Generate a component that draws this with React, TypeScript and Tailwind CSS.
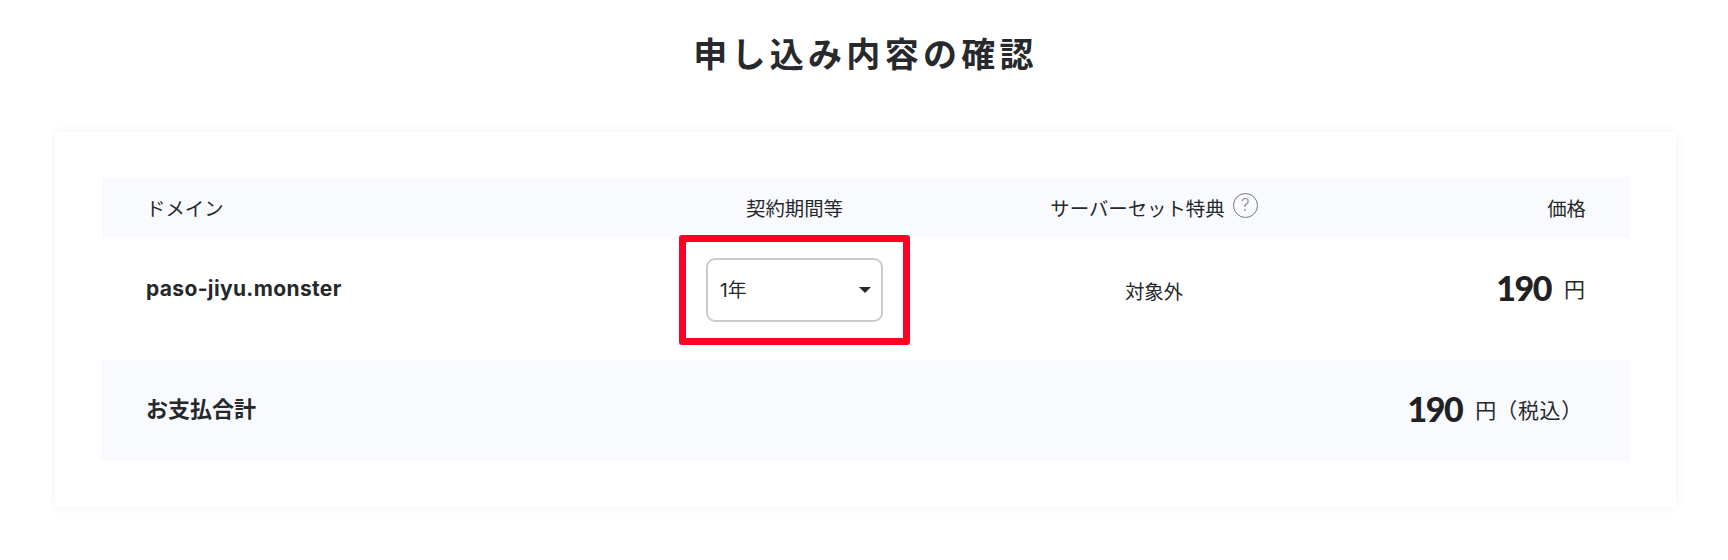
const sans = "font-['Inter','Noto_Sans_CJK_JP',sans-serif]";
const num = "font-['Lato','Noto_Sans_CJK_JP',sans-serif]";
const cols = 'grid-cols-[574px_239px_480px_236px]';

function Price({ suffix }: { suffix?: string }) {
  return (
    <span className="flex items-center justify-end">
      <span className={`${num} mb-[4px] text-[34px] leading-none font-black tracking-[-1.5px] text-[#1f2124]`}>190</span>
      <span className="ml-[13px] text-[21px] leading-none">円</span>
      {suffix && <span className="text-[21px] leading-none tracking-[0.7px]">{suffix}</span>}
    </span>
  );
}

export default function App() {
  return (
    <div className={`${sans} h-[560px] w-[1728px] overflow-hidden bg-white text-[#26282b]`}>
      <div className="ml-[55px] w-[1621px] pt-[33px]">
        <h1 className="text-center text-[34px] leading-[44px] font-bold tracking-[4.3px] text-[#27292c]">
          申し込み内容の確認
        </h1>

        {/* Card */}
        <div className="mt-[55px] h-[375px] bg-white px-[46px] pt-[45px] shadow-[0_0_10px_rgba(0,0,0,0.06)]">
          {/* Header */}
          <div className={`grid h-[61px] ${cols} items-center bg-[#f8fafd] pt-[4px] text-[19.4px]`}>
            <div className="pl-[45px]">ドメイン</div>
            <div className="text-center">契約期間等</div>
            <div className="flex items-center justify-center">
              <span>サーバーセット特典</span>
              <span className="mb-[8px] ml-[8px] flex h-[25px] w-[25px] items-center justify-center rounded-full border border-[#777] text-[17px] leading-none font-light text-[#888]">
                ?
              </span>
            </div>
            <div className="pr-[44px] text-right">価格</div>
          </div>

          {/* Row */}
          <div className={`grid h-[122px] ${cols} items-center pb-[19px]`}>
            <div className="mb-[2px] pl-[45px] text-[21px] font-bold tracking-[0.35px]">paso-jiyu.monster</div>
            <div className="flex justify-center">
              <div className="relative">
                <div className="flex h-[64px] w-[177px] items-center justify-between rounded-[9px] border-2 border-[#cbcbcb] bg-white pl-[12px] pr-[10px] text-[19px]">
                  <span className="pt-[3px]">1年</span>
                  <span className="h-0 w-0 border-x-[6px] border-t-[6px] border-x-transparent border-t-[#26282b]" />
                </div>
                <div className="absolute -inset-x-[27px] -inset-y-[23px] rounded-[3px] border-[7px] border-[#ff0022]" />
              </div>
            </div>
            <div className="pt-[6px] text-center text-[19.4px]">対象外</div>
            <div className="pr-[45px]">
              <Price />
            </div>
          </div>

          {/* Total */}
          <div className="grid h-[101px] grid-cols-[1fr_auto] items-center bg-[#f8fafd] pl-[45px] pr-[47px]">
            <div className="mb-[2px] text-[22px] font-bold">お支払合計</div>
            <Price suffix="（税込）" />
          </div>
        </div>
      </div>
    </div>
  );
}
